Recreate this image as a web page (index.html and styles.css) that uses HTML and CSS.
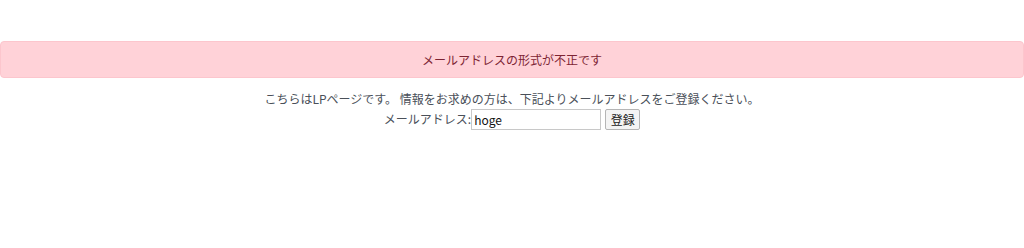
FILE: index.html
```html
<!DOCTYPE html>
<html lang="ja">
<head>
<meta charset="utf-8">
<link rel="stylesheet" href="styles.css">
</head>
<body>
<div class="page">
  <div class="alert">メールアドレスの形式が不正です</div>
  <div class="content">
    <p class="intro">こちらはLPページです。 情報をお求めの方は、下記よりメールアドレスをご登録ください。</p>
    <form class="form">
      <label class="label" for="email">メールアドレス:</label><input id="email" class="input" type="text" value="hoge"><button class="btn" type="button">登録</button>
    </form>
  </div>
</div>
</body>
</html>
```
FILE: styles.css
```css
html, body {
  margin: 0;
  padding: 0;
  background: #fff;
}
body {
  font-family: "Noto Sans CJK JP", "Noto Sans", sans-serif;
  font-size: 12px;
  color: #4a5059;
}
.page {
  padding-top: 41px;
}
.alert {
  background: #ffd2d8;
  border: 1px solid #fcc6cd;
  border-radius: 4px;
  color: #7d2433;
  text-align: center;
  height: 35px;
  line-height: 35px;
  box-sizing: content-box;
}
.content {
  text-align: center;
  padding-top: 12px;
}
.intro {
  margin: 0;
  line-height: 18px;
}
.form {
  margin: 0;
  display: flex;
  justify-content: center;
  align-items: center;
}
.label {
  line-height: 22px;
}
.input {
  width: 130px;
  height: 21px;
  box-sizing: border-box;
  border: 1px solid #c8c8c8;
  padding: 0 2px;
  font-family: "Noto Sans CJK JP", "Noto Sans", sans-serif;
  font-size: 12px;
  color: #111;
  outline: none;
}
.btn {
  margin-left: 4px;
  height: 21px;
  width: 35px;
  box-sizing: border-box;
  border: 1px solid #b5b5b5;
  border-radius: 2px;
  background: #f4f4f4;
  font-family: "Noto Sans CJK JP", "Noto Sans", sans-serif;
  font-size: 12px;
  color: #222;
  padding: 0;
}
```
